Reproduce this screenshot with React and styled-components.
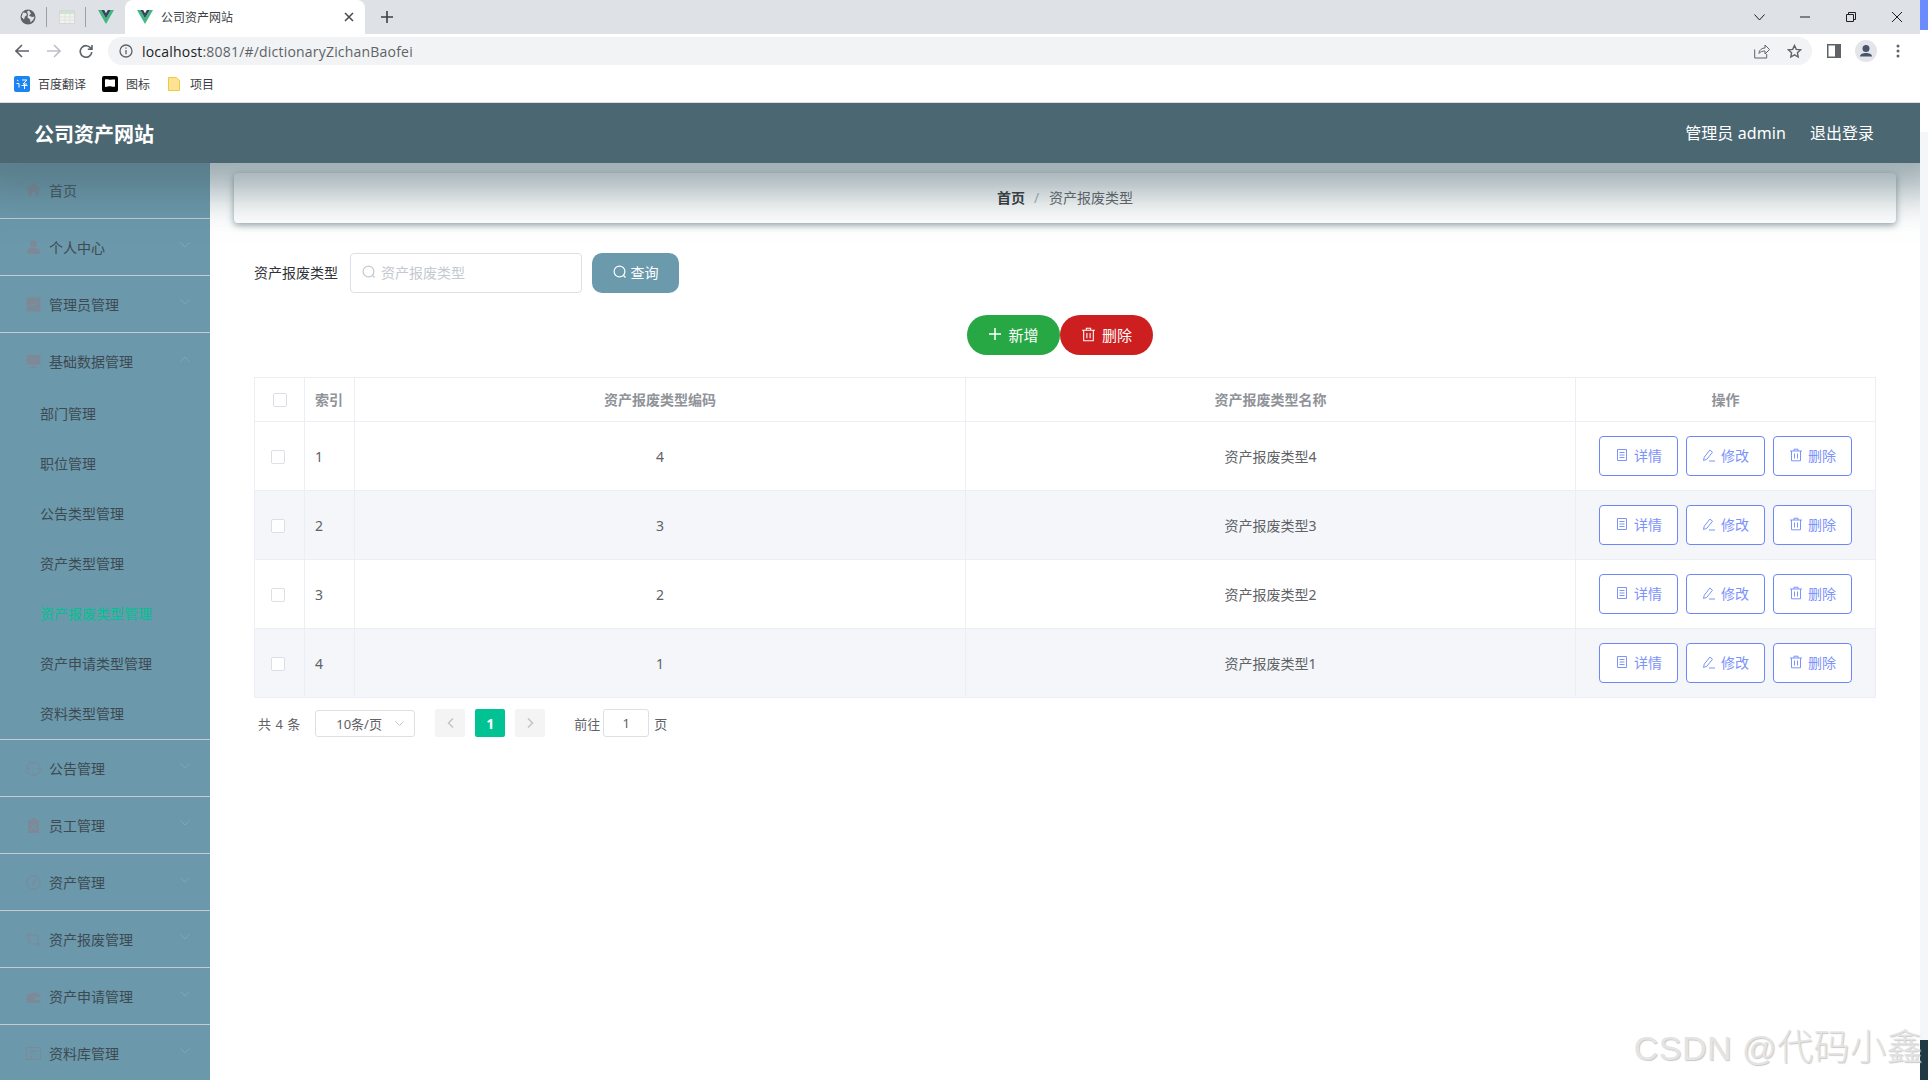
import React from "react";
import styled, { createGlobalStyle } from "styled-components";

const Global = createGlobalStyle`
  html, body { margin: 0; padding: 0; height: 100%; overflow: hidden; background: #fff; }
  #root { height: 100%; }
  * { box-sizing: border-box; }
  body { font-family: "Noto Sans", "Noto Sans CJK SC", sans-serif; }
`;

const Shell = styled.div`
  position: relative;
  display: flex;
  width: 1928px;
  height: 1080px;
  overflow: hidden;
`;
const Page = styled.div`
  width: 1920px;
  height: 1080px;
  display: flex;
  flex-direction: column;
  overflow: hidden;
  background: #fff;
`;
const RightStrip = styled.div`
  width: 8px;
  height: 1080px;
  display: flex;
  flex-direction: column;
`;
const StripBand = styled.div`
  height: ${(p) => p.$h};
  flex: ${(p) => (p.$grow ? 1 : "none")};
  background: ${(p) => p.$bg};
`;

/* browser chrome */
const Chrome = styled.div`
  position: relative;
  z-index: 3;
  flex: none;
  background: #fff;
`;
const TabStrip = styled.div`
  height: 34px;
  padding-left: 8px;
  display: flex;
  background: #dee1e6;
`;
const TabSlot = styled.div`
  position: relative;
  width: 39px;
  display: flex;
  align-items: center;
  justify-content: center;
  &::after {
    content: ${(p) => (p.$sep ? '""' : "none")};
    position: absolute;
    right: 0;
    top: 7px;
    width: 1px;
    height: 20px;
    background: #9aa0a6;
  }
`;
const ActiveTab = styled.div`
  width: 240px;
  display: flex;
  align-items: center;
  padding: 0 8px 0 12px;
  background: #fff;
  border-radius: 8px 8px 0 0;
`;
const TabTitle = styled.span`
  margin-left: 8px;
  font-size: 12px;
  color: #3c4043;
`;
const TabClose = styled.div`
  margin-left: auto;
  width: 16px;
  height: 16px;
  display: flex;
  align-items: center;
  justify-content: center;
  color: #45494d;
`;
const NewTab = styled.div`
  width: 44px;
  display: flex;
  align-items: center;
  justify-content: center;
  color: #3c4043;
`;
const WinButtons = styled.div`
  margin-left: auto;
  display: flex;
`;
const WinButton = styled.div`
  width: 46px;
  display: flex;
  align-items: center;
  justify-content: center;
  color: #1f1f1f;
`;
const Toolbar = styled.div`
  height: 34px;
  padding: 0 6px;
  display: flex;
  align-items: center;
`;
const ToolSlot = styled.div`
  width: 32px;
  height: 28px;
  display: flex;
  align-items: center;
  justify-content: center;
  color: ${(p) => p.$c || "#5f6368"};
`;
const Omnibox = styled.div`
  flex: 1;
  height: 28px;
  margin: 0 6px;
  padding: 0 2px 0 10px;
  display: flex;
  align-items: center;
  border-radius: 14px;
  background: #f1f3f4;
`;
const Url = styled.span`
  margin-left: 8px;
  flex: 1;
  font-family: "Open Sans", sans-serif;
  font-size: 14px;
  letter-spacing: 0.2px;
  color: #5f6368;
  & b { font-weight: 400; color: #202124; }
`;
const Bookmarks = styled.div`
  height: 35px;
  padding-left: 14px;
  padding-bottom: 3px;
  display: flex;
  align-items: center;
  border-bottom: 1px solid #dadce0;
`;
const Bookmark = styled.div`
  display: flex;
  align-items: center;
  margin-right: ${(p) => p.$mr || "16px"};
  font-size: 12px;
  color: #3c4043;
  & > span { margin-left: ${(p) => p.$gap || "8px"}; }
`;

/* app header */
const Header = styled.header`
  position: relative;
  z-index: 2;
  flex: none;
  height: 60px;
  padding: 0 46px 0 34px;
  display: flex;
  align-items: center;
  justify-content: space-between;
  background: #4b6771;
  color: #fff;
  box-shadow: 0 0 40px 30px rgba(75, 103, 113, 0.55);
`;
const Brand = styled.div`
  font-size: 20px;
  font-weight: 700;
`;
const HeaderLinks = styled.div`
  display: flex;
  gap: 24px;
  font-size: 16px;
  margin-top: -2px;
`;
const AdminName = styled.span`
  letter-spacing: 0.1px;
`;

const Body = styled.div`
  flex: 1;
  min-height: 0;
  display: flex;
`;

/* sidebar */
const Sidebar = styled.nav`
  flex: none;
  width: 210px;
  height: 100%;
  overflow: hidden;
  background: #6b98ab;
  font-size: 14px;
  color: #3d4a52;
`;
const Group = styled.div`
  border-bottom: 1px solid #c4ccd0;
`;
const MenuTitle = styled.div`
  height: ${(p) => (p.$short ? "55px" : "56px")};
  padding: 0 20px ${(p) => (p.$short ? "2px" : "0")} 26px;
  display: flex;
  align-items: center;
`;
const MenuIcon = styled.svg`
  flex: none;
  width: 15px;
  height: 15px;
  margin-right: 8px;
  color: #7d8997;
`;
const Chevron = styled.svg`
  margin-left: auto;
  margin-top: -4px;
  width: 10px;
  height: 6px;
  color: #80a5b7;
`;
const SubItem = styled.div`
  height: 50px;
  padding: 0 0 2px 40px;
  display: flex;
  align-items: center;
  color: ${(p) => (p.$active ? "#00c292" : "inherit")};
`;

/* main */
const Main = styled.main`
  flex: 1;
  min-width: 0;
  padding: 10px 24px 0;
`;
const Crumbs = styled.div`
  height: 50px;
  padding-bottom: 2px;
  display: flex;
  align-items: center;
  justify-content: center;
  font-size: 14px;
  border-radius: 4px;
  background: #fff;
  box-shadow: 0 2px 7px rgba(50, 75, 85, 0.55);
  color: #606266;
`;
const CrumbHome = styled.span`
  font-weight: 700;
  color: #303133;
`;
const CrumbSep = styled.span`
  margin: 0 10px 0 9px;
  color: #a9afb6;
`;
const Content = styled.div`
  margin: 30px -3px 0 20px;
`;
const SearchRow = styled.div`
  display: flex;
  align-items: center;
  height: 40px;
`;
const SearchLabel = styled.label`
  width: 96px;
  padding-bottom: 2px;
  font-size: 14px;
  color: #2f3338;
`;
const SearchBox = styled.div`
  width: 232px;
  height: 40px;
  padding: 0 0 2px 11px;
  display: flex;
  align-items: center;
  border: 1px solid #dcdfe6;
  border-radius: 4px;
  font-size: 14px;
  color: #c4c8d0;
  & > span { margin-left: 5px; }
`;
const QueryButton = styled.button`
  margin-left: 10px;
  width: 87px;
  height: 40px;
  display: flex;
  align-items: center;
  justify-content: center;
  gap: 4px;
  padding: 0 0 2px;
  border: 0;
  border-radius: 10px;
  background: #6b9aad;
  color: #fff;
  font: inherit;
  font-size: 14px;
`;
const ActionRow = styled.div`
  margin-top: 22px;
  padding-right: 33px;
  display: flex;
  justify-content: center;
`;
const PillButton = styled.button`
  width: 93px;
  height: 40px;
  display: flex;
  align-items: center;
  justify-content: center;
  gap: 6px;
  padding: 0 0 2px;
  border: 0;
  border-radius: 20px;
  background: ${(p) => p.$bg};
  color: #fff;
  font: inherit;
  font-size: 15px;
`;
const Table = styled.table`
  margin-top: 22px;
  width: 1621px;
  table-layout: fixed;
  border-collapse: collapse;
  font-size: 14px;
  color: #606266;
`;
const Th = styled.th`
  height: 44px;
  padding: 0 0 2px ${(p) => (p.$left ? "10px" : "0")};
  border: 1px solid #ebeef5;
  text-align: ${(p) => (p.$left ? "left" : "center")};
  font-weight: 700;
  color: #909399;
`;
const Td = styled.td`
  height: 69px;
  padding: 0 0 0 ${(p) => (p.$left ? "10px" : "0")};
  border: 1px solid #ebeef5;
  text-align: ${(p) => (p.$left ? "left" : "center")};
  background: ${(p) => (p.$even ? "#f4f6fa" : "#fff")};
`;
const Check = styled.span`
  display: inline-block;
  vertical-align: middle;
  width: 14px;
  height: 14px;
  margin: ${(p) => (p.$shift ? "-2px 4px 0 0" : "0")};
  border: 1px solid #dcdfe6;
  border-radius: 2px;
  background: #fff;
`;
const RowActions = styled.div`
  display: flex;
  justify-content: center;
  gap: 8px;
`;
const RowButton = styled.button`
  width: 79px;
  height: 40px;
  display: flex;
  align-items: center;
  justify-content: center;
  gap: 5px;
  padding: 0 0 2px;
  border: 1px solid #6f86f8;
  border-radius: 4px;
  background: #fff;
  color: #7c93fb;
  font: inherit;
  font-size: 14px;
`;
const Pager = styled.div`
  margin-top: 11px;
  padding-left: 4px;
  height: 28px;
  display: flex;
  align-items: center;
  font-size: 13px;
  color: #606266;
`;
const PagerTotal = styled.span`
  word-spacing: 1px;
`;
const Select = styled.div`
  margin-left: 15px;
  width: 100px;
  height: 27px;
  padding: 0 10px 0 20px;
  display: flex;
  align-items: center;
  justify-content: space-between;
  border: 1px solid #dcdfe6;
  border-radius: 3px;
  & > svg { color: #c0c4cc; }
`;
const PageBtn = styled.div`
  width: 30px;
  height: 28px;
  margin-left: ${(p) => p.$ml || "10px"};
  display: flex;
  align-items: center;
  justify-content: center;
  border-radius: 2px;
  background: ${(p) => (p.$on ? "#00c292" : "#f4f4f5")};
  color: ${(p) => (p.$on ? "#fff" : "#c0c4cc")};
  font-size: 14px;
  font-weight: 700;
`;
const GoText = styled.span`
  margin-left: ${(p) => p.$ml};
`;
const GoInput = styled.div`
  width: 46px;
  height: 28px;
  margin: 0 5px 0 3px;
  display: flex;
  align-items: center;
  justify-content: center;
  border: 1px solid #dcdfe6;
  border-radius: 3px;
`;
const Watermark = styled.div`
  position: absolute;
  right: 5px;
  bottom: 10px;
  z-index: 5;
  font-family: "Liberation Sans", "Noto Sans CJK SC", sans-serif;
  font-size: 34px;
  line-height: 44px;
  letter-spacing: 0.5px;
  white-space: nowrap;
  color: #e4e4e4;
  text-shadow: 1px 1px 1px #c8c8c8;
  & > span { font-size: 36px; font-weight: 300; }
`;

/* drawings */
const Vue = () => (
  <svg width="16" height="14" viewBox="0 0 16 14">
    <path d="M0 0h3.2L8 8.2 12.8 0H16L8 14z" fill="#41b883" />
    <path d="M3.2 0h3L8 3.2 9.8 0h3L8 8.2z" fill="#35495e" />
  </svg>
);
const Line = ({ w = 16, h = 16, v = "0 0 16 16", sw = 1.6, d, fill = "none" }) => (
  <svg width={w} height={h} viewBox={v} fill={fill} stroke={fill === "none" ? "currentColor" : "none"} strokeWidth={sw}>
    <path d={d} />
  </svg>
);
const SearchIcon = ({ c }) => (
  <svg width="14" height="14" viewBox="0 0 14 14" fill="none" stroke={c} strokeWidth="1.2">
    <circle cx="6.5" cy="6.5" r="5.4" />
    <path d="M10.5 10.5l2 2" />
  </svg>
);
const Tickets = () => (
  <svg width="14" height="14" viewBox="0 0 14 14" fill="none" stroke="currentColor" strokeWidth="1">
    <path d="M2.5 1.5h9v11h-9zM4.5 4.5h5M4.5 7h5M4.5 9.5h5" />
  </svg>
);
const Pencil = () => (
  <svg width="14" height="14" viewBox="0 0 14 14" fill="none" stroke="currentColor" strokeWidth="1">
    <path d="M1.5 12.5l.8-3.4 5.6-7 2.6 2.1-5.6 7zM7 13h6" />
  </svg>
);
const Trash = ({ s = 14 }) => (
  <svg width={s} height={s} viewBox="0 0 14 14" fill="none" stroke="currentColor" strokeWidth="1">
    <path d="M1 3h12M5 3V1.2h4V3M2.5 3v9.8h9V3M5.5 5.5v5M8.5 5.5v5" />
  </svg>
);
const Down = () => (
  <Chevron viewBox="0 0 10 6" fill="none" stroke="currentColor" strokeWidth="1"><path d="M.5.5L5 5 9.5.5" /></Chevron>
);
const Up = () => (
  <Chevron viewBox="0 0 10 6" fill="none" stroke="currentColor" strokeWidth="1"><path d="M.5 5.5L5 1l4.5 4.5" /></Chevron>
);

const icons = {
  home: <path fill="currentColor" d="M7.5 1L15 7.5h-2V14H9.3v-4H5.7v4H2V7.5H0z" />,
  user: <path fill="currentColor" d="M7.5 0.5a3.4 3.4 0 110 6.8 3.4 3.4 0 010-6.8zM1 14v-3c0-2 2-3 3-3h7c1 0 3 1 3 3v3z" />,
  data: <path fill="currentColor" fillRule="evenodd" d="M.5.5h14v14H.5zM2.5 11l3.5-3.5 2 1.5 4.5-4.5-.7-.6L8 8 6 6.5l-4 4z" />,
  screen: <path fill="currentColor" d="M.5 1h14v9.5H.5zM3.5 13h8v1h-8zM6.500 11h2v2h-2z" />,
  aim: <path fill="none" stroke="currentColor" d="M7.5.7a6.8 6.8 0 110 13.6 6.8 6.8 0 010-13.6zM7.5 0v4M7.5 11v4M0 7.5h4M11 7.5h4" />,
  clip: <path fill="currentColor" fillRule="evenodd" d="M5.5 0h4v2h3.5v13H2V2h3.5zM5 6l-.8.8L6.7 9.3 4.2 11.8l.8.8 2.5-2.5 2.5 2.5.8-.8-2.5-2.5 2.5-2.5-.8-.8-2.5 2.5z" />,
  gauge: <path fill="none" stroke="currentColor" d="M7.5.7a6.8 6.8 0 110 13.6 6.8 6.8 0 010-13.6zM9.6 3.8L6.4 9l1.4.9z" />,
  crop: <path fill="none" stroke="currentColor" d="M3 0v12h12M0 3h12v12" />,
  wallet: <path fill="currentColor" d="M.5 5.5l8-1.5V1.5L12 5h2.5v3H10a1.5 1.5 0 000 3h4.5v3H.5z" />,
  order: <path fill="none" stroke="currentColor" d="M.5 1.5h14v12H.5zM3.5 5h8M3.5 8h5M3.5 11h3" />,
};

const Item = ({ icon, label, open, short, children }) => (
  <Group>
    <MenuTitle $short={short}>
      <MenuIcon viewBox="0 0 15 15">{icons[icon]}</MenuIcon>
      {label}
      {short ? null : open ? <Up /> : <Down />}
    </MenuTitle>
    {children}
  </Group>
);

const rows = [
  ["1", "4", "资产报废类型4"],
  ["2", "3", "资产报废类型3"],
  ["3", "2", "资产报废类型2"],
  ["4", "1", "资产报废类型1"],
];
const subs = ["部门管理", "职位管理", "公告类型管理", "资产类型管理", "资产报废类型管理", "资产申请类型管理", "资料类型管理"];

export default function App() {
  return (
    <Shell>
      <Global />
      <Page>
        <Chrome>
          <TabStrip>
            <TabSlot $sep>
              <svg width="16" height="16" viewBox="0 0 16 16">
                <circle cx="8" cy="8" r="7.5" fill="#5f6368" />
                <path d="M3 3.5l3 .5 1 2-2 1.5-1 3-2.500-2.500zM9 1.500l2 3-2 2 3 1.500 2.500-.5-1 3-3 3-.5-3-2.500-2 .5-3-1-3z" fill="#dee1e6" />
              </svg>
            </TabSlot>
            <TabSlot $sep>
              <svg width="16" height="14" viewBox="0 0 16 14">
                <rect x=".5" y=".5" width="15" height="13" fill="#f1f3f1" stroke="#d5d8d5" />
                <rect x="1" y="1" width="14" height="3" fill="#cfe3cf" />
                <path d="M1 7h14M1 10h14M6 4v9M11 4v9" stroke="#dfe2df" />
              </svg>
            </TabSlot>
            <TabSlot><Vue /></TabSlot>
            <ActiveTab>
              <Vue />
              <TabTitle>公司资产网站</TabTitle>
              <TabClose>
                <Line w={10} h={10} v="0 0 10 10" sw={1.5} d="M1 1l8 8M9 1l-8 8" />
              </TabClose>
            </ActiveTab>
            <NewTab>
              <Line w={12} h={12} v="0 0 12 12" sw={1.6} d="M6 0v12M0 6h12" />
            </NewTab>
            <WinButtons>
              <WinButton><Line w={11} h={7} v="0 0 11 7" sw={1} d="M.5.5l5 5.500 5-5.500" /></WinButton>
              <WinButton><Line w={10} h={2} v="0 0 10 2" sw={1} d="M0 1h10" /></WinButton>
              <WinButton><Line w={10} h={10} v="0 0 10 10" sw={1} d="M.5 2.500h7v7h-7zM2.500 2.500v-2h7v7h-2" /></WinButton>
              <WinButton><Line w={10} h={10} v="0 0 10 10" sw={1} d="M0 0l10 10M10 0L0 10" /></WinButton>
            </WinButtons>
          </TabStrip>
          <Toolbar>
            <ToolSlot>
              <Line w={14} h={14} v="0 0 14 14" sw={1.6} d="M14 7H1.500M7 1L1 7l6 6" />
            </ToolSlot>
            <ToolSlot $c="#bdc1c6">
              <Line w={14} h={14} v="0 0 14 14" sw={1.6} d="M0 7h12.500M7 1l6 6-6 6" />
            </ToolSlot>
            <ToolSlot>
              <Line w={14} h={14} v="0 0 14 14" sw={1.6} d="M12 4.500A5.800 5.800 0 1 0 12.800 8M13 1v4.200H8.800" />
            </ToolSlot>
            <Omnibox>
              <svg width="14" height="14" viewBox="0 0 14 14" fill="none" stroke="#5f6368" strokeWidth="1.300" style={{ margin: "0 1px" }}>
                <circle cx="7" cy="7" r="6" />
                <path d="M7 6v4.200M7 3.500v1.300" />
              </svg>
              <Url><b>localhost</b>:8081/#/dictionaryZichanBaofei</Url>
              <ToolSlot>
                <Line w={16} h={16} sw={1} d="M.7 6.500V15h12V11M5 10.500c0-3.500 3-5.500 6-5.500V2l4.500 4.500L11 11V8c-2.500 0-4.500.5-6 2.500z" />
              </ToolSlot>
              <ToolSlot>
                <Line w={15} h={15} v="0 0 15 15" sw={1.400} d="M7.500 1.500l1.800 3.900 4.200.5-3.100 2.900.8 4.200-3.700-2.100-3.700 2.100.8-4.200L1.500 5.900l4.200-.5z" />
              </ToolSlot>
            </Omnibox>
            <ToolSlot>
              <svg width="14" height="14" viewBox="0 0 14 14">
                <path fillRule="evenodd" fill="#5f6368" d="M0 0h14v14H0zM1.500 1.500v11H8v-11z" />
              </svg>
            </ToolSlot>
            <ToolSlot>
              <svg width="22" height="22" viewBox="0 0 22 22">
                <circle cx="11" cy="11" r="11" fill="#e3e5ea" />
                <circle cx="11" cy="8.500" r="3.500" fill="#4a5468" />
                <path d="M5 16.500c0-2.500 3-3.500 6-3.500s6 1 6 3.500z" fill="#4a5468" />
              </svg>
            </ToolSlot>
            <ToolSlot>
              <svg width="4" height="14" viewBox="0 0 4 14" fill="#5f6368">
                <circle cx="2" cy="2" r="1.500" /><circle cx="2" cy="7" r="1.500" /><circle cx="2" cy="12" r="1.500" />
              </svg>
            </ToolSlot>
          </Toolbar>
          <Bookmarks>
            <Bookmark>
              <svg width="16" height="16" viewBox="0 0 16 16">
                <rect width="16" height="16" rx="2" fill="#1a84f2" />
                <path d="M3 4l1.500 1M2.500 7.500H5v4M8 4h5l-4 4 4 0M7.500 9.500h6M10.500 8v5" stroke="#fff" strokeWidth="1" fill="none" />
              </svg>
              <span>百度翻译</span>
            </Bookmark>
            <Bookmark $mr="18px">
              <svg width="16" height="16" viewBox="0 0 16 16">
                <rect width="16" height="16" rx="2" fill="#000" />
                <path d="M3 3.500c3-1 4 1 7 0l3 0v7c-3 1-4-1-7 0l-3 .5z" fill="#fff" />
              </svg>
              <span>图标</span>
            </Bookmark>
            <Bookmark $gap="10px">
              <svg width="12" height="14" viewBox="0 0 12 14">
                <path d="M.5.500h8l3 3v10H.5z" fill="#fde293" stroke="#f2c83f" />
              </svg>
              <span>项目</span>
            </Bookmark>
          </Bookmarks>
        </Chrome>
        <Header>
          <Brand>公司资产网站</Brand>
          <HeaderLinks>
            <AdminName>管理员 admin</AdminName>
            <span>退出登录</span>
          </HeaderLinks>
        </Header>
        <Body>
          <Sidebar>
            <Item icon="home" label="首页" short />
            <Item icon="user" label="个人中心" />
            <Item icon="data" label="管理员管理" />
            <Item icon="screen" label="基础数据管理" open>
              {subs.map((s, i) => (
                <SubItem key={s} $active={i === 4}>{s}</SubItem>
              ))}
            </Item>
            <Item icon="aim" label="公告管理" />
            <Item icon="clip" label="员工管理" />
            <Item icon="gauge" label="资产管理" />
            <Item icon="crop" label="资产报废管理" />
            <Item icon="wallet" label="资产申请管理" />
            <Item icon="order" label="资料库管理" />
          </Sidebar>
          <Main>
            <Crumbs>
              <CrumbHome>首页</CrumbHome>
              <CrumbSep>/</CrumbSep>
              <span>资产报废类型</span>
            </Crumbs>
            <Content>
              <SearchRow>
                <SearchLabel>资产报废类型</SearchLabel>
                <SearchBox>
                  <SearchIcon c="#c4c8d0" />
                  <span>资产报废类型</span>
                </SearchBox>
                <QueryButton>
                  <SearchIcon c="#fff" />
                  查询
                </QueryButton>
              </SearchRow>
              <ActionRow>
                <PillButton $bg="#28a745">
                  <Line w={14} h={14} v="0 0 14 14" sw={1.500} d="M7 1v12M1 7h12" />
                  新增
                </PillButton>
                <PillButton $bg="#cd1f1f">
                  <Trash s={15} />
                  删除
                </PillButton>
              </ActionRow>
              <Table>
                <colgroup>
                  <col width="50" /><col width="50" /><col width="611" /><col width="610" /><col width="300" />
                </colgroup>
                <thead>
                  <tr>
                    <Th><Check /></Th>
                    <Th $left>索引</Th>
                    <Th>资产报废类型编码</Th>
                    <Th>资产报废类型名称</Th>
                    <Th>操作</Th>
                  </tr>
                </thead>
                <tbody>
                  {rows.map((r, i) => {
                    const even = i % 2 === 1;
                    return (
                      <tr key={r[0]}>
                        <Td $even={even}><Check $shift /></Td>
                        <Td $even={even} $left>{r[0]}</Td>
                        <Td $even={even}>{r[1]}</Td>
                        <Td $even={even}>{r[2]}</Td>
                        <Td $even={even}>
                          <RowActions>
                            <RowButton><Tickets />详情</RowButton>
                            <RowButton><Pencil />修改</RowButton>
                            <RowButton><Trash />删除</RowButton>
                          </RowActions>
                        </Td>
                      </tr>
                    );
                  })}
                </tbody>
              </Table>
              <Pager>
                <PagerTotal>共 4 条</PagerTotal>
                <Select>
                  10条/页
                  <Line w={9} h={5} v="0 0 9 5" sw={1} d="M.5.500l4 4 4-4" />
                </Select>
                <PageBtn $ml="20px">
                  <Line w={7} h={10} v="0 0 7 10" sw={1.500} d="M6 .500L1.500 5 6 9.500" />
                </PageBtn>
                <PageBtn $on>1</PageBtn>
                <PageBtn>
                  <Line w={7} h={10} v="0 0 7 10" sw={1.500} d="M1 .500L5.500 5 1 9.500" />
                </PageBtn>
                <GoText $ml="29px">前往</GoText>
                <GoInput>1</GoInput>
                <span>页</span>
              </Pager>
            </Content>
          </Main>
        </Body>
      </Page>
      <RightStrip>
        <StripBand $h="30px" $bg="#6a8cff" />
        <StripBand $h="102px" $bg="#fff" />
        <StripBand $grow $bg="#f5f6f8" />
        <StripBand $h="40px" $bg="#1f3a44" />
      </RightStrip>
      <Watermark>CSDN @<span>代码小鑫</span></Watermark>
    </Shell>
  );
}
